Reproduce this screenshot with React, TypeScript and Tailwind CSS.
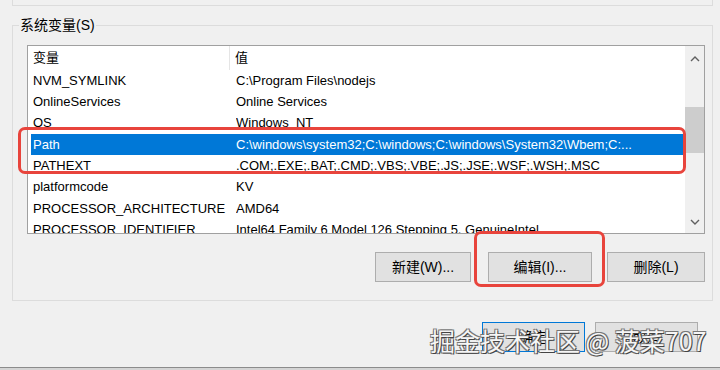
const ROWS: [string, string][] = [
  ["NVM_SYMLINK", "C:\\Program Files\\nodejs"],
  ["OnlineServices", "Online Services"],
  ["OS", "Windows_NT"],
  ["Path", "C:\\windows\\system32;C:\\windows;C:\\windows\\System32\\Wbem;C:..."],
  ["PATHEXT", ".COM;.EXE;.BAT;.CMD;.VBS;.VBE;.JS;.JSE;.WSF;.WSH;.MSC"],
  ["platformcode", "KV"],
  ["PROCESSOR_ARCHITECTURE", "AMD64"],
  ["PROCESSOR_IDENTIFIER", "Intel64 Family 6 Model 126 Stepping 5, GenuineIntel"],
];

const SELECTED = "Path";

function Chevron({ up }: { up?: boolean }) {
  return (
    <svg width="10" height="6" viewBox="0 0 10 6" aria-hidden="true">
      <path
        d={up ? "M1 5 L5 1 L9 5" : "M1 1 L5 5 L9 1"}
        fill="none"
        stroke="#606060"
        strokeWidth="1.4"
      />
    </svg>
  );
}

function WinButton({ label, width, primary }: { label: string; width: string; primary?: boolean }) {
  return (
    <button
      className={`flex h-[30px] ${width} items-center justify-center border bg-[#e1e1e1] text-[14px] text-black ${
        primary ? "border-[#0078d7]" : "border-[#adadad]"
      }`}
    >
      {label}
    </button>
  );
}

export default function App() {
  return (
    <div
      className="relative h-[370px] w-[720px] overflow-hidden bg-[#f0f0f0] text-black"
      style={{ fontFamily: '"Liberation Sans", "Noto Sans CJK SC", sans-serif' }}
    >
      {/* tail of the user-variables group above */}
      <div className="ml-[12px] mr-[7px] h-[6px] border-x border-b border-[#dcdcdc]" />

      {/* 系统变量 group */}
      <fieldset className="ml-[12px] mr-[7px] mt-[9px] h-[286px] border border-[#dcdcdc]">
        <legend className="ml-[6px] px-px text-[14px] leading-[20px]">系统变量(S)</legend>
        <div className="pl-[14px] pr-[7px] pt-[10px]">
          {/* list view */}
          <div className="flex h-[189px] border border-[#a0a0a0] bg-white">
            <div className="flex-1 overflow-hidden text-[13px]">
              <div className="grid h-[24px] grid-cols-[197px_1fr] items-center pl-[5px]">
                <span className="border-r border-[#e5e5e5] leading-[24px]">变量</span>
                <span className="pl-[5px]">值</span>
              </div>
              {ROWS.map(([name, value]) => {
                const sel = name === SELECTED;
                return (
                  <div
                    key={name}
                    className={`ml-[3px] grid h-[21.3px] grid-cols-[205px_1fr] items-center whitespace-nowrap ${
                      sel ? "bg-[#0078d7] text-white" : ""
                    }`}
                  >
                    <span className="pl-[2px]">{name}</span>
                    <span className="overflow-hidden">{value}</span>
                  </div>
                );
              })}
            </div>
            {/* scrollbar */}
            <div className="flex w-[19px] flex-col items-center bg-[#f0f0f0]">
              <div className="flex h-[24px] items-center justify-center pt-[2px]">
                <Chevron up />
              </div>
              <div className="mt-[37px] h-[46px] w-full bg-[#cdcdcd]" />
              <div className="mt-auto flex h-[22px] items-center justify-center">
                <Chevron />
              </div>
            </div>
          </div>

          {/* action buttons */}
          <div className="mt-[18px] flex justify-end gap-[17px]">
            <WinButton label="新建(W)..." width="w-[96px]" />
            <div className="flex gap-[15px]">
              <WinButton label="编辑(I)..." width="w-[104px]" />
              <WinButton label="删除(L)" width="w-[98px]" />
            </div>
          </div>
        </div>
      </fieldset>

      {/* dialog buttons */}
      <div className="mt-[21px] flex gap-[10px] pl-[482px]">
        <WinButton label="确定" width="w-[103px]" primary />
        <WinButton label="取消" width="w-[103px]" />
      </div>

      {/* bottom edge */}
      <div className="absolute bottom-0 left-0 h-[3px] w-full border-t border-[#8c8c8c] bg-[#d4d4d4]" />

      {/* red annotation boxes */}
      <div className="absolute left-[18px] top-[127px] h-[47px] w-[668px] rounded-[7px] border-[3px] border-[#e8443c]" />
      <div className="absolute left-[474px] top-[231px] h-[56px] w-[131px] rounded-[7px] border-[3px] border-[#e8443c]" />

      {/* watermark */}
      <div
        className="absolute left-[430px] top-[323px] whitespace-nowrap text-[25px] leading-[34px] text-[#f6f6f6] [text-shadow:1px_1px_0_#444,-1px_-1px_0_#777,1px_-1px_0_#777,-1px_1px_0_#777]"
        style={{ fontFamily: '"Noto Sans CJK SC", sans-serif' }}
      >
        掘金技术社区 @ 菠菜707
      </div>
    </div>
  );
}
